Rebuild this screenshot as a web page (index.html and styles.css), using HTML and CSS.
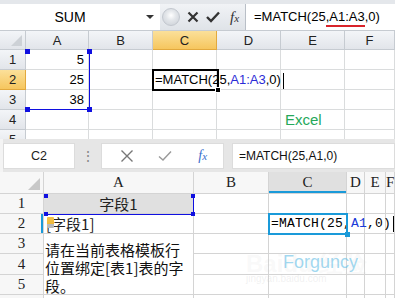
FILE: index.html
```html
<!DOCTYPE html>
<html lang="en">
<head>
    <meta charset="UTF-8">
    <title>MATCH</title>
    <link rel="stylesheet" href="styles.css">
</head>
<body>
    <!-- Excel 2010 shot -->
    <div class="xl">
        <div class="fbar">
            <div class="namebox">SUM<span class="drop"></span></div>
            <div class="fbtns">
                <span class="knob"></span>
                <svg width="12" height="12" viewBox="0 0 12 12"><path d="M1.5 1.5 L10.5 10.5 M10.5 1.5 L1.5 10.5" stroke="#333" stroke-width="2.2"/></svg>
                <svg width="14" height="12" viewBox="0 0 14 12"><path d="M1 6 L5 10 L13 1.5" stroke="#333" stroke-width="2.4" fill="none"/></svg>
                <span class="fx">f<i>x</i></span>
            </div>
            <div class="formula">=MATCH(25<span class="ul">,A1:A3</span>,0)</div>
        </div>

        <div class="sheet">
            <div class="corner"><span class="tri"></span></div>
            <div class="ch">A</div><div class="ch">B</div><div class="ch on">C</div><div class="ch">D</div><div class="ch">E</div><div class="ch">F</div>

            <div class="rh">1</div><div class="c num">5</div><div class="c"></div><div class="c"></div><div class="c"></div><div class="c"></div><div class="c"></div>
            <div class="rh on">2</div><div class="c num">25</div><div class="c"></div>
            <div class="c edit">=MATCH(25,<span class="ref">A1:A3</span>,0)<span class="caret"></span></div>
            <div class="c"></div><div class="c"></div><div class="c"></div>
            <div class="rh">3</div><div class="c num">38</div><div class="c"></div><div class="c"></div><div class="c"></div><div class="c"></div><div class="c"></div>
            <div class="rh">4</div><div class="c"></div><div class="c"></div><div class="c"></div><div class="c"></div><div class="c excel">Excel</div><div class="c"></div>
            <div class="rh">5</div><div class="c"></div><div class="c"></div><div class="c"></div><div class="c"></div><div class="c"></div><div class="c"></div>

            <div class="refbox">
                <span class="h tl"></span><span class="h tr"></span><span class="h bl"></span><span class="h br"></span>
            </div>
            <div class="active"><span class="fill"></span></div>
        </div>
    </div>

    <!-- Forguncy / WPS-style shot -->
    <div class="fg">
        <div class="fbar">
            <div class="namebox">C2</div>
            <div class="dots">⋮</div>
            <div class="btnbox">
                <svg width="14" height="14" viewBox="0 0 14 14"><path d="M1.5 1.5 L12.5 12.5 M12.5 1.5 L1.5 12.5" stroke="#777" stroke-width="1.4"/></svg>
                <svg width="14" height="12" viewBox="0 0 14 12"><path d="M1 6.5 L5 10 L13 1.5" stroke="#999" stroke-width="1.4" fill="none"/></svg>
                <span class="fx">f<i>x</i></span>
            </div>
            <div class="formula">=MATCH(25,A1,0)</div>
        </div>

        <div class="sheet">
            <div class="corner"><span class="tri"></span></div>
            <div class="ch">A</div><div class="ch">B</div><div class="ch on">C</div><div class="ch">D</div><div class="ch">E</div><div class="ch">F</div>

            <div class="rh">1</div><div class="c field">字段1</div><div class="c"></div><div class="c"></div><div class="c"></div><div class="c"></div><div class="c"></div>
            <div class="rh on">2</div><div class="c bind"><span class="flag"></span>[字段1]</div><div class="c"></div>
            <div class="c edit">=MATCH(25,<span class="ref">A1</span>,0)<span class="caret"></span></div>
            <div class="c"></div><div class="c"></div><div class="c"></div>
            <div class="rh">3</div><div class="c merged">请在当前表格模板行位置绑定[表1]表的字段。</div><div class="c"></div><div class="c"></div><div class="c"></div><div class="c"></div><div class="c"></div>
            <div class="rh">4</div><div class="c"></div><div class="c"></div><div class="c"></div><div class="c"></div><div class="c"></div>
            <div class="rh">5</div><div class="c"></div><div class="c"></div><div class="c"></div><div class="c"></div><div class="c"></div>
            <div class="rh">6</div><div class="c"></div><div class="c"></div><div class="c"></div><div class="c"></div><div class="c"></div><div class="c"></div>

            <div class="bindbox">
                <span class="h tl"></span><span class="h tr"></span><span class="h bl"></span><span class="h br"></span>
            </div>
            <div class="active"><span class="fill"></span></div>

            <div class="wm-baidu">Bai<span>du</span> 经验</div>
            <div class="wm-url">jingyan.baidu.com</div>
            <div class="wm-fg">Forguncy</div>
        </div>
    </div>
</body>
</html>
```

FILE: styles.css
```css
* {
    margin: 0;
    padding: 0;
    box-sizing: border-box;
}

body {
    width: 395px;
    height: 298px;
    overflow: hidden;
    background: #fff;
    font-family: 'Liberation Sans', Arial, sans-serif;
    color: #000;
}

/* ---------- Excel 2010 ---------- */
.xl {
    height: 139px;
    overflow: hidden;
}

.xl .fbar {
    display: flex;
    height: 31px;
    padding-top: 4px;
    background: #e4e7eb;
    border-bottom: 1px solid #c6cbd1;
}

.xl .namebox {
    position: relative;
    width: 160px;
    padding-right: 20px;
    background: #fff;
    display: flex;
    align-items: center;
    justify-content: center;
    font-size: 14px;
}

.xl .drop {
    position: absolute;
    right: 6px;
    top: 11px;
    border-left: 4px solid transparent;
    border-right: 4px solid transparent;
    border-top: 4px solid #333;
}

.xl .fbtns {
    width: 85px;
    display: flex;
    align-items: center;
    gap: 7px;
    background: linear-gradient(#f1f3f6, #dfe3e8);
}

.xl .knob {
    width: 18px;
    height: 18px;
    margin-left: 2px;
    border-radius: 50%;
    background: radial-gradient(circle at 50% 40%, #fff 0, #e3e6ea 40%, #c9ced5 100%);
    border: 1px solid #c2c7ce;
}

.fx {
    font-family: 'Liberation Serif', serif;
    font-style: italic;
    font-size: 15px;
    color: #333;
    margin-left: 3px;
}

.fx i {
    font-size: 11px;
}

.xl .formula {
    flex: 1;
    background: #fff;
    border-left: 1px solid #b9bfc7;
    padding-left: 8px;
    font-size: 13px;
    line-height: 25px;
    white-space: nowrap;
}

.xl .ul {
    border-bottom: 2px solid #d8232a;
    padding-bottom: 1px;
}

.xl .sheet {
    position: relative;
    display: grid;
    grid-template-columns: 26px 63px 64px 64px 64px 64px 1fr;
    grid-template-rows: 19px repeat(5, 20px);
}

.xl .corner,
.xl .ch,
.xl .rh {
    background: linear-gradient(#f3f5f8, #e2e5ea);
    border-right: 1px solid #c6cbd1;
    border-bottom: 1px solid #c6cbd1;
    display: flex;
    align-items: center;
    justify-content: center;
    font-size: 13px;
    color: #222;
}

.xl .corner {
    position: relative;
}

.xl .tri {
    position: absolute;
    right: 3px;
    bottom: 3px;
    border-left: 11px solid transparent;
    border-bottom: 11px solid #cdd1d6;
}

.xl .ch.on,
.xl .rh.on {
    background: linear-gradient(#fbe09a, #f6c65e);
    border-color: #e2a93e;
}

.xl .c {
    border-right: 1px solid #dadcdd;
    border-bottom: 1px solid #dadcdd;
    font-size: 13px;
    line-height: 19px;
    padding: 0 4px 0 3px;
    white-space: nowrap;
}

.xl .num {
    text-align: right;
}

.xl .edit {
    position: relative;
    z-index: 2;
    padding-left: 2px;
}

.xl .ref {
    color: #2b2bd6;
}

.caret {
    display: inline-block;
    width: 1px;
    height: 16px;
    margin-left: 2px;
    vertical-align: middle;
    background: #000;
}

.xl .excel {
    color: #25a85a;
    font-size: 15px;
    line-height: 20px;
    padding-left: 4px;
}

.refbox {
    position: absolute;
    left: 26px;
    top: 19px;
    width: 64px;
    height: 60px;
    border-right: 1px solid #1010e0;
    border-bottom: 1px solid #1010e0;
}

.h {
    position: absolute;
    width: 5px;
    height: 5px;
    background: #1010e0;
}

.refbox .tl { left: -1px; top: -1px; }
.refbox .tr { right: -3px; top: -1px; }
.refbox .bl { left: -1px; bottom: -3px; }
.refbox .br { right: -3px; bottom: -3px; }

.xl .active {
    position: absolute;
    left: 152px;
    top: 38px;
    width: 67px;
    height: 22px;
    border: 2px solid #000;
    z-index: 3;
}

.xl .fill {
    position: absolute;
    right: -4px;
    bottom: -4px;
    width: 6px;
    height: 6px;
    background: #000;
    border: 1px solid #fff;
}

/* ---------- Forguncy ---------- */
.fg {
    height: 159px;
    overflow: hidden;
}

.fg .fbar {
    display: flex;
    align-items: center;
    height: 33px;
    background: #e6e6e6;
    border-left: 3px solid #f4f4f4;
}

.fg .namebox,
.fg .btnbox,
.fg .formula {
    height: 26px;
    background: #fff;
    border: 1px solid #dcdcdc;
}

.fg .namebox {
    width: 72px;
    text-align: center;
    font-size: 12.5px;
    line-height: 24px;
    color: #222;
}

.fg .dots {
    width: 26px;
    text-align: center;
    color: #888;
    font-size: 14px;
}

.fg .btnbox {
    width: 123px;
    display: flex;
    align-items: center;
    justify-content: space-around;
    padding: 0 4px 0 6px;
}

.fg .fx {
    color: #3a6ecc;
    font-size: 14px;
}

.fg .formula {
    flex: 1;
    margin-left: 8px;
    padding-left: 6px;
    font-size: 12px;
    line-height: 24px;
    color: #111;
}

.fg .sheet {
    position: relative;
    display: grid;
    grid-template-columns: 44px 150px 75px 78px 18px 21px 1fr;
    grid-template-rows: 22px 20px 20px 20px 21px 20px 20px;
}

.fg .corner,
.fg .ch,
.fg .rh {
    background: #f7f7f7;
    border-right: 1px solid #d4d4d4;
    border-bottom: 1px solid #d4d4d4;
    display: flex;
    align-items: center;
    justify-content: center;
    font-family: 'Liberation Serif', serif;
    font-size: 15px;
    color: #222;
}

.fg .corner {
    position: relative;
}

.fg .tri {
    position: absolute;
    right: 3px;
    bottom: 3px;
    border-left: 12px solid transparent;
    border-bottom: 12px solid #c8c8c8;
}

.fg .ch.on {
    background: #e0e0e0;
    box-shadow: inset 0 -2px #1a9ad9;
}

.fg .rh.on {
    box-shadow: inset -2px 0 #1a9ad9;
}

.fg .c {
    border-right: 1px solid #d4d4d4;
    border-bottom: 1px solid #d4d4d4;
    font-family: 'Noto Sans CJK SC', sans-serif;
    font-size: 15px;
    line-height: 19px;
    white-space: nowrap;
}

.fg .field {
    background: #e0e0e0;
    text-align: center;
    color: #222;
}

.fg .bind {
    position: relative;
    padding-left: 2px;
    color: #222;
}

.fg .flag {
    position: absolute;
    left: 3px;
    top: 3px;
    width: 7px;
    height: 11px;
    background: linear-gradient(#f3c24a 0, #f0b93a 65%, #b9b9b9 65%);
    border-radius: 1px;
}

.fg .edit {
    position: relative;
    z-index: 2;
    padding-left: 2px;
    font-family: 'Liberation Mono', monospace;
    font-size: 13px;
    line-height: 19px;
    letter-spacing: 0.2px;
}

.fg .ref {
    color: #1a3bd8;
}

.fg .merged {
    grid-row: span 3;
    white-space: normal;
    padding: 7px 6px 0 1px;
    line-height: 18px;
    color: #111;
}

.bindbox {
    position: absolute;
    left: 44px;
    top: 22px;
    width: 150px;
    height: 21px;
    border-right: 1px solid #1010e0;
    border-bottom: 1px solid #1010e0;
}

.bindbox .h { width: 4px; height: 4px; }
.bindbox .tl { left: 0; top: 0; }
.bindbox .tr { right: -2px; top: 0; }
.bindbox .bl { left: 0; bottom: -2px; }
.bindbox .br { right: -2px; bottom: -2px; }

.fg .active {
    position: absolute;
    left: 268px;
    top: 41px;
    width: 80px;
    height: 22px;
    border: 2px solid #1a9ad9;
    z-index: 3;
}

.fg .fill {
    position: absolute;
    right: -4px;
    bottom: -4px;
    width: 5px;
    height: 5px;
    background: #1a9ad9;
}

.wm-baidu {
    position: absolute;
    left: 246px;
    top: 76px;
    font-size: 24px;
    font-weight: bold;
    color: rgba(210, 210, 210, 0.15);
    z-index: 4;
}

.wm-url {
    position: absolute;
    left: 246px;
    top: 101px;
    font-size: 10px;
    color: rgba(200, 200, 200, 0.25);
    z-index: 4;
}

.wm-fg {
    position: absolute;
    left: 283px;
    top: 80px;
    font-size: 18px;
    color: rgba(100, 190, 230, 0.6);
    z-index: 5;
}
```
